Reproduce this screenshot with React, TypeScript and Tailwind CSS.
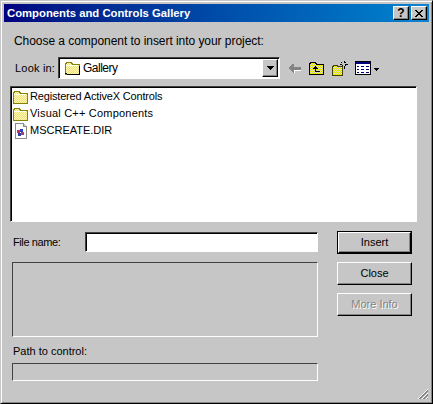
const font = { fontFamily: '"Liberation Sans", Arial, sans-serif' };

// Yellow folder used in the combo box and the file list
function Folder({ dark = false }: { dark?: boolean }) {
	return (
		<svg width="16" height="14" viewBox="0 0 16 14" shapeRendering="crispEdges" className="shrink-0">
			<defs>
				<pattern id="dither" width="2" height="2" patternUnits="userSpaceOnUse">
					<rect width="2" height="2" fill="#ffff9c" />
					<rect width="1" height="1" fill="#f0d890" />
					<rect x="1" y="1" width="1" height="1" fill="#f0d890" />
				</pattern>
			</defs>
			<path d="M1 3V2h1V1h5v1h1v1h7v10H1z" fill="url(#dither)" stroke="#848400" strokeWidth="1" />
			<path d="M2 4h12" stroke="#ffffff" />
			{dark && <path d="M15 5v8H3l-2-1" fill="none" stroke="#000000" />}
		</svg>
	);
}

function DocIcon() {
	return (
		<svg width="14" height="16" viewBox="0 0 14 16" shapeRendering="crispEdges" className="shrink-0">
			<path d="M1.5.5h8l3 3v12h-11z" fill="#ffffff" stroke="#8a8a8a" />
			<path d="M9.5.5v3h3" fill="#c6c6c6" stroke="#8a8a8a" />
			<rect x="3" y="7" width="3" height="3" fill="#c03060" />
			<rect x="6" y="6" width="3" height="3" fill="#3040c0" />
			<rect x="4" y="10" width="3" height="3" fill="#3040a0" />
			<rect x="7" y="9" width="3" height="3" fill="#a04080" />
		</svg>
	);
}

function ToolIcons() {
	return (
		<div className="flex items-center">
			<svg width="0" height="0" className="absolute">
				<defs>
					<pattern id="tool-dither" width="2" height="2" patternUnits="userSpaceOnUse">
						<rect width="2" height="2" fill="#ffff00" />
						<rect width="1" height="1" fill="#c6c6a0" />
						<rect x="1" y="1" width="1" height="1" fill="#c6c6a0" />
					</pattern>
				</defs>
			</svg>
			{/* back arrow, disabled */}
			<svg width="13" height="11" viewBox="0 0 13 11" shapeRendering="crispEdges" className="ml-[8px]">
				<path d="M0 5h1V4h1V3h1V2h1V1h2v3h7v3H6v3H5V9H4V8H3V7H2V6H1V5z" fill="#848484" />
				<path d="M6.5 10V7.5h6.5" fill="none" stroke="#ffffff" />
			</svg>
			{/* up one level */}
			<svg width="15" height="14" viewBox="0 0 15 14" shapeRendering="crispEdges" className="ml-[8px]">
				<path d="M.5 13.5v-11h1v-1h5v1h1v1h7v10z" fill="url(#tool-dither)" stroke="#000000" />
				<path d="M6 5h1v1h1v1h1v1H7v2h4v1H6V8H4V7h1V6h1z" fill="#000000" />
			</svg>
			{/* new folder */}
			<svg width="16" height="15" viewBox="0 0 16 15" shapeRendering="crispEdges" className="ml-[8px]">
				<path d="M.5 14.5v-9h1v-1h4v1h5v9z" fill="url(#tool-dither)" stroke="#424200" />
				<path d="M12 0v2M12 5v3M8 3h2M13 3h3M9 1l1 1M14 1l-1 1M14 5l-1-1M10 5l1-1" stroke="#000000" />
			</svg>
			{/* view menu */}
			<svg width="16" height="14" viewBox="0 0 16 14" shapeRendering="crispEdges" className="ml-[7px]">
				<rect x=".5" y=".5" width="15" height="13" fill="#ffffff" stroke="#000000" />
				<rect x="1" y="1" width="14" height="2" fill="#000080" />
				<path d="M2 5h2v1H2zM2 8h2v1H2zM2 11h2v1H2zM6 5h3v1H6zM6 8h3v1H6zM6 11h3v1H6zM11 5h3v1h-3zM11 8h3v1h-3zM11 11h3v1h-3z" fill="#000080" />
			</svg>
			<svg width="5" height="3" viewBox="0 0 5 3" shapeRendering="crispEdges" className="ml-[3px] mt-[2px]">
				<path d="M0 0h5v1H4v1H3v1H2V2H1V1H0z" fill="#000000" />
			</svg>
		</div>
	);
}

function CaptionButton({ children, className = '' }: { children: React.ReactNode; className?: string }) {
	return (
		<div
			className={`w-[16px] h-[14px] bg-[#c6c6c6] border border-t-white border-l-white border-r-black border-b-black flex items-center justify-center shadow-[inset_-1px_-1px_0_#848484] ${className}`}
		>
			{children}
		</div>
	);
}

function PushButton({ label, isDefault, disabled }: { label: string; isDefault?: boolean; disabled?: boolean }) {
	return (
		<div className={isDefault ? 'w-[75px] h-[23px] border border-black flex' : 'w-[75px] h-[23px] flex'}>
			<div className="flex-1 flex items-center justify-center bg-[#c6c6c6] border border-t-white border-l-white border-r-black border-b-black shadow-[inset_-1px_-1px_0_#848484]">
				<span
					className={
						disabled
							? 'text-[11px] text-[#848484] [text-shadow:1px_1px_0_#ffffff]'
							: 'text-[11px] text-black'
					}
				>
					{label}
				</span>
			</div>
		</div>
	);
}

const sunken =
	'border border-t-[#424242] border-l-[#424242] border-r-white border-b-white';

export default function App() {
	return (
		<div
			style={font}
			className="w-[433px] h-[404px] bg-[#c6c6c6] border border-t-[#c6c6c6] border-l-[#c6c6c6] border-r-black border-b-black shadow-[inset_1px_1px_0_#ffffff,inset_-1px_-1px_0_#848484] p-[3px] flex flex-col text-[11px] text-black overflow-hidden relative"
		>
			<div className="h-[18px] bg-gradient-to-r from-[#000080] to-[#1084d0] flex items-center justify-between pl-[3px] pr-[2px]">
				<span className="text-white font-bold text-[11.3px] whitespace-nowrap">
					Components and Controls Gallery
				</span>
				<div className="flex">
					<CaptionButton className="mr-[2px]">
						<span className="font-bold text-[12px] leading-none">?</span>
					</CaptionButton>
					<CaptionButton>
						<svg width="8" height="7" viewBox="0 0 8 7" shapeRendering="crispEdges">
							<path d="M0 0h2v1h1v1h2V1h1V0h2v1H7v1H6v1H5v1h1v1h1v1h1v1H6V6H5V5H3v1H2v1H0V6h1V5h1V4h1V3H2V2H1V1H0z" fill="#000000" />
						</svg>
					</CaptionButton>
				</div>
			</div>

			<div className="flex-1 flex flex-col pl-[6px] pr-[12px]">
				<div className="mt-[12px] ml-[4px] h-[14px] leading-[14px] text-[12px] tracking-[-0.05px] whitespace-nowrap">
					Choose a component to insert into your project:
				</div>

				<div className="mt-[9px] flex items-center">
					<span className="ml-[5px] w-[43px] tracking-[0.2px] whitespace-nowrap">Look in:</span>
					<div className={`w-[222px] h-[22px] bg-white ${sunken} shadow-[inset_1px_1px_0_#000000] flex items-center pl-[5px] pr-[1px]`}>
						<Folder dark />
						<span className="ml-[3px] flex-1 text-[12px] tracking-[-0.5px]">Gallery</span>
						<div className="w-[16px] h-[18px] bg-[#c6c6c6] border border-t-white border-l-white border-r-black border-b-black shadow-[inset_-1px_-1px_0_#848484] flex items-center justify-center">
							<svg width="7" height="4" viewBox="0 0 7 4" shapeRendering="crispEdges">
								<path d="M0 0h7v1H6v1H5v1H4v1H3V3H2V2H1V1H0z" fill="#000000" />
							</svg>
						</div>
					</div>
					<ToolIcons />
				</div>

				<div className={`mt-[7px] h-[136px] bg-white ${sunken} shadow-[inset_1px_1px_0_#000000] pl-[1px] pt-[1px]`}>
					<div className="h-[17px] flex items-center gap-[2px]">
						<Folder />
						<span className="tracking-[-0.17px]">Registered ActiveX Controls</span>
					</div>
					<div className="h-[17px] flex items-center gap-[2px]">
						<Folder />
						<span className="tracking-[0.2px]">Visual C++ Components</span>
					</div>
					<div className="h-[17px] flex items-center gap-[2px] pl-[2px]">
						<DocIcon />
						<span>MSCREATE.DIR</span>
					</div>
				</div>

				<div className="mt-[10px] flex">
					<div className="w-[306px] ml-[2px] flex flex-col">
						<div className="flex items-center h-[20px]">
							<span className="ml-[1px] w-[72px] tracking-[-0.4px] whitespace-nowrap">File name:</span>
							<div className={`flex-1 h-[20px] bg-white ${sunken} shadow-[inset_1px_1px_0_#000000]`} />
						</div>
						<div className={`mt-[10px] h-[75px] ${sunken}`} />
						<div className="mt-[7px] ml-[1px] h-[14px] leading-[14px]">Path to control:</div>
						<div className={`mt-[5px] h-[18px] ${sunken}`} />
					</div>
					<div className="ml-[19px] -mt-[1px] flex flex-col gap-[8px]">
						<PushButton label="Insert" isDefault />
						<PushButton label="Close" />
						<PushButton label="More Info" disabled />
					</div>
				</div>
			</div>

			{/* resize grip */}
			<svg width="12" height="12" viewBox="0 0 12 12" shapeRendering="crispEdges" className="absolute right-[3px] bottom-[3px]">
				<path d="M11 1L1 11M11 5L5 11M11 9L9 11" stroke="#ffffff" />
				<path d="M11 2L2 11M11 3L3 11M11 6L6 11M11 7L7 11M11 10L10 11" stroke="#848484" />
			</svg>
		</div>
	);
}
